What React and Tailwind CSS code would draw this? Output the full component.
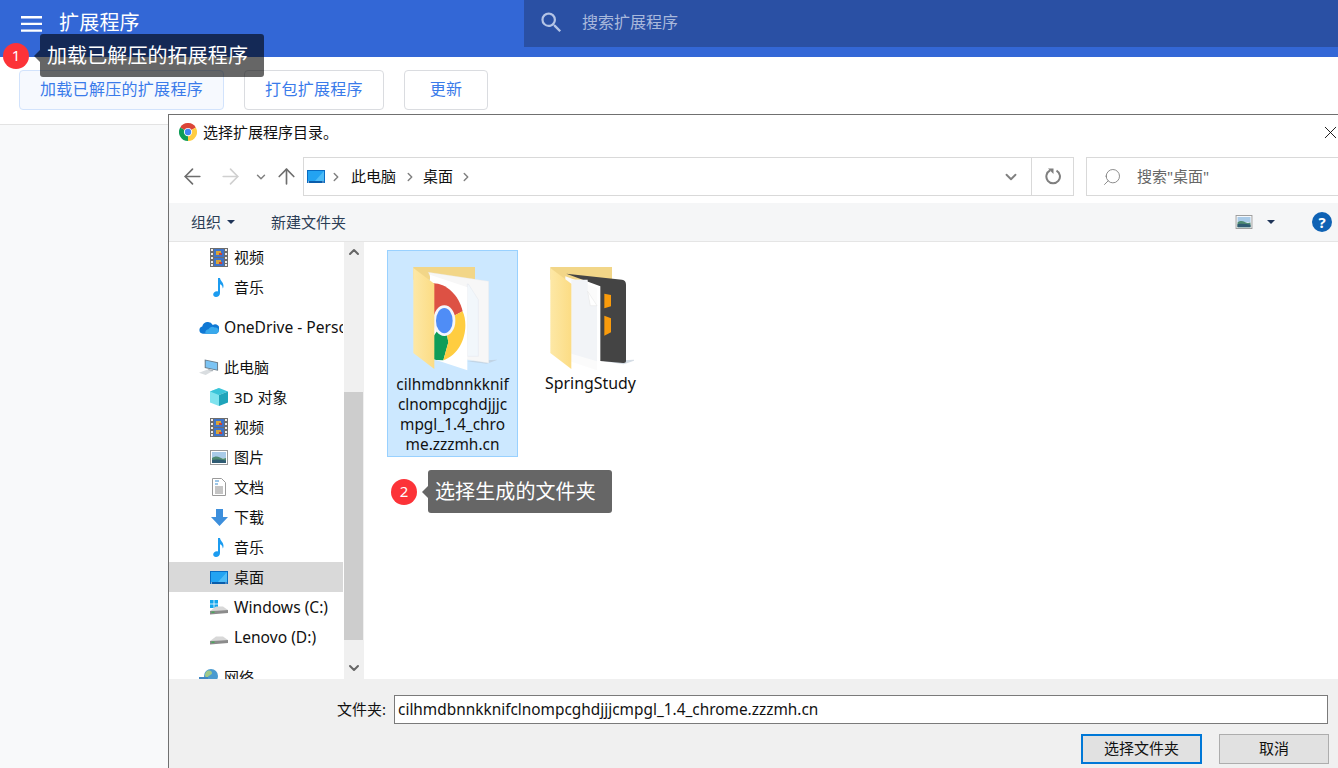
import React from 'react';
import { ArrowLeft, ArrowRight, ArrowUp, ChevronDown, ChevronRight, ChevronUp, Search, X } from 'lucide-react';

function Hamburger() {
  return (
    <svg width="21" height="16" viewBox="0 0 21 16" className="shrink-0">
      <path d="M0 0h21v2.400H0zM0 6.700h21v2.400H0zM0 13.400h21v2.400H0z" fill="#fff" />
    </svg>
  );
}

function MaterialSearch() {
  return (
    <svg width="27" height="27" viewBox="0 0 24 24" className="shrink-0">
      <path d="M15.500 14h-.79l-.28-.27A6.471 6.471 0 0 0 16 9.500 6.500 6.500 0 1 0 9.500 16c1.610 0 3.090-.59 4.230-1.570l.27.28v.79l5 4.990L20.490 19l-4.990-5zm-6 0C7.010 14 5 11.990 5 9.500S7.010 5 9.500 5 14 7.010 14 9.500 11.990 14 9.500 14z" fill="#b4c4e6" />
    </svg>
  );
}

function Refresh() {
  return (
    <svg width="17" height="17" viewBox="0 0 17 17">
      <path d="M11.500 2.600A6.800 6.800 0 1 1 5 2.500" fill="none" stroke="#7f7f7f" strokeWidth="2" />
      <path d="M3 0.500h5.500v5.500z" fill="#7f7f7f" />
    </svg>
  );
}

function Film() {
  return (
    <svg width="18" height="19" viewBox="0 0 18 19">
      <rect x="0" y="0" width="18" height="19" fill="#6d6d6d" />
      <rect x="4" y="1" width="10" height="8" fill="#3f74c9" />
      <rect x="4" y="10" width="10" height="8" fill="#3f74c9" />
      <rect x="6" y="3" width="5" height="4" fill="#d8a53a" />
      <rect x="6" y="12" width="5" height="4" fill="#d8a53a" />
      <rect x="9" y="5" width="3" height="2" fill="#c8413a" />
      <rect x="9" y="14" width="3" height="2" fill="#c8413a" />
      {[1, 5, 9, 13, 16].map((y) => (
        <React.Fragment key={y}>
          <rect x="1" y={y} width="2" height="2" fill="#eeeeee" />
          <rect x="15" y={y} width="2" height="2" fill="#eeeeee" />
        </React.Fragment>
      ))}
    </svg>
  );
}

function Note() {
  return (
    <svg width="18" height="19" viewBox="0 0 18 19">
      <path d="M8 0h2c.3 3 3.500 4 3.500 8 0 1-.3 2-.8 2.600.2-2.400-1.200-3.800-2.700-4.400V15c0 2.400-2 4-4 4-1.700 0-2.800-1-2.800-2.400C3.200 14.700 5 13.300 6.800 13.300c.5 0 .9.100 1.200.2z" fill="#1c9cf0" />
    </svg>
  );
}

function Cloud() {
  return (
    <svg width="21" height="14" viewBox="0 0 21 14">
      <path d="M4 14a3.800 3.800 0 0 1-.6-7.500A6 6 0 0 1 14.500 4.800 4.600 4.600 0 0 1 20.800 11 3.500 3.500 0 0 1 17.500 14z" fill="#0f78d4" />
      <path d="M7 14c-1-2 .5-4.500 3-4.600 1-2.500 4.500-3.500 6.500-1.800 2-.6 4.300.8 4.300 3.400A3.500 3.500 0 0 1 17.500 14z" fill="#38a9ec" />
    </svg>
  );
}

function Computer() {
  return (
    <svg width="21" height="18" viewBox="0 0 21 18">
      <path d="M6 1l14 3v9L6 10z" fill="#6b7a86" />
      <path d="M7 2.300l12 2.500v7L7 9.200z" fill="#7cc4f4" />
      <path d="M0 15l9-3.500 6 1.500-8 4.500z" fill="#d9dde0" />
      <path d="M10 11l5 1.500-.5 1-5-1.400z" fill="#a9b0b6" />
    </svg>
  );
}

function Cube() {
  return (
    <svg width="18" height="18" viewBox="0 0 18 18">
      <path d="M9 0L0 3.500v11L9 18z" fill="#7fe3ee" />
      <path d="M9 0l9 3.500L9 7 0 3.500z" fill="#39c4d8" />
      <path d="M9 7l9-3.500v11L9 18z" fill="#1fa4ba" />
    </svg>
  );
}

function Picture({ w = 18, h = 15 }) {
  return (
    <svg width={w} height={h} viewBox="0 0 18 15">
      <rect x="0.500" y="0.500" width="17" height="14" fill="#fff" stroke="#9a9a9a" />
      <rect x="2" y="2" width="14" height="6" fill="#a9cbe8" />
      <path d="M2 8c3-2 5-2 8-.5s4 1 6 .5v5H2z" fill="#4e8a72" />
      <path d="M2 10c4-1 9-.5 14 .5V13H2z" fill="#2f5b73" />
    </svg>
  );
}

function Doc() {
  return (
    <svg width="14" height="18" viewBox="0 0 14 18">
      <path d="M.5.500h9l4 4v13H.5z" fill="#fff" stroke="#9a9a9a" />
      <path d="M3 3h4M3 6h3" stroke="#3b8ed0" strokeWidth="1" />
      <path d="M3 9h8M3 11h8M3 13h8M3 15h8" stroke="#8a8a8a" strokeWidth="1" />
    </svg>
  );
}

function Download() {
  return (
    <svg width="17" height="17" viewBox="0 0 17 17">
      <path d="M5 0h7v8h5l-8.500 9L0 8h5z" fill="#3d8fdc" />
    </svg>
  );
}

function Desktop({ w = 18, h = 13 }) {
  return (
    <svg width={w} height={h} viewBox="0 0 18 13">
      <rect x="0" y="0" width="18" height="13" fill="#0a6cc2" />
      <rect x="1" y="1" width="16" height="10" fill="#23a3f2" />
      <path d="M8 11L17 1v10z" fill="#4dbcf7" />
      <rect x="1" y="11.500" width="16" height="1" fill="#0a4f94" />
      <rect x="1" y="11.500" width="1" height="1" fill="#fff" />
      <rect x="15.500" y="11.500" width="1" height="1" fill="#fff" />
    </svg>
  );
}

function Drive({ windows }) {
  return (
    <svg width="18" height="15" viewBox="0 0 18 15">
      {windows && (
        <g fill="#12a5ec">
          <rect x="0" y="0" width="3.600" height="3.600" />
          <rect x="4.400" y="0" width="3.600" height="3.600" />
          <rect x="0" y="4.400" width="3.600" height="3.600" />
          <rect x="4.400" y="4.400" width="3.600" height="3.600" />
        </g>
      )}
      <path d="M0 11L6 6.500h7L18 10z" fill="#d8d8d8" />
      <path d="M0 11L18 10V13L0 14.500z" fill="#8b8b8b" />
      <rect x="1.500" y="11.500" width="3" height="1.500" fill="#49a85a" />
    </svg>
  );
}

function Globe() {
  return (
    <svg width="20" height="18" viewBox="0 0 20 18">
      <circle cx="12" cy="8" r="7" fill="#4a9bd0" />
      <path d="M8 3c3-1 5 0 5 2s-3 2-4 4-3 0-3-2 1-3 2-4z" fill="#9fc98a" />
      <path d="M0 9h9v9H0z" fill="#3f86c4" />
    </svg>
  );
}

function ChromeLogo({ size = 18 }) {
  return (
    <svg width={size} height={size} viewBox="0 0 48 48">
      <path d="M24 24L44.800 12A24 24 0 0 0 3.200 12z" fill="#db4437" />
      <path d="M24 24L3.200 12A24 24 0 0 0 24 48z" fill="#0f9d58" />
      <path d="M24 24V48A24 24 0 0 0 44.800 12z" fill="#ffcd40" />
      <circle cx="24" cy="24" r="11" fill="#fff" />
      <circle cx="24" cy="24" r="8.500" fill="#4285f4" />
    </svg>
  );
}

function FolderChrome() {
  return (
    <svg width="87" height="110" viewBox="90 50 261 330" className="ml-px mt-3">
      <defs>
        <linearGradient id="flapA" x1="0" y1="0" x2="1" y2="0">
          <stop offset="0" stopColor="#fde8a6" />
          <stop offset="1" stopColor="#fcdc84" />
        </linearGradient>
        <clipPath id="pageA">
          <path d="M150 85L262 123V372L150 335z" />
        </clipPath>
      </defs>
      <path d="M100 62H285V100H100z" fill="#f2d688" />
      <path d="M260 345L355 340 320 352z" fill="#b9c6d4" opacity="0.6" />
      <path d="M145 78L326 105V350L262 340z" fill="#f7f7f7" stroke="#e6e6e6" />
      <path d="M265 113L295 160V330H262V113z" fill="#f2f7fb" stroke="#d9dfe6" />
      <path d="M150 85L262 123V372L150 335z" fill="#ffffff" />
      <g clipPath="url(#pageA)">
        <path d="M150 112C190 105 235 140 248 195L193 223 150 200z" fill="#dd5144" />
        <path d="M193 223L150 285V340L190 342 205 288z" fill="#0f9d58" />
        <path d="M193 223L248 195C268 240 252 320 190 342L205 288z" fill="#ffcd40" />
        <ellipse cx="193" cy="223" rx="33" ry="46" fill="#f4f6fb" />
        <ellipse cx="193" cy="223" rx="25" ry="38" fill="#4f8df6" />
      </g>
      <path d="M100 65L163 112V368L100 320z" fill="url(#flapA)" />
    </svg>
  );
}

function FolderBook() {
  return (
    <svg width="87" height="110" viewBox="500 50 261 330" className="mt-3">
      <defs>
        <linearGradient id="flapB" x1="0" y1="0" x2="1" y2="0">
          <stop offset="0" stopColor="#fde8a6" />
          <stop offset="1" stopColor="#fcdc84" />
        </linearGradient>
      </defs>
      <path d="M510 62H695V100H510z" fill="#f2d688" />
      <path d="M670 345L770 340 730 354z" fill="#b9c6d4" opacity="0.6" />
      <path d="M558 82L725 100Q737 102 737 115V345Q737 351 728 350L660 344V120z" fill="#444444" />
      <path d="M672 142L692 146V180L672 186z" fill="#f99b0c" />
      <path d="M672 208L692 216V258L672 268z" fill="#f99b0c" />
      <path d="M555 90L650 125V372L555 340z" fill="#fbfbfb" />
      <path d="M573 100H622V140L650 178V345L573 322z" fill="#f2f4f7" />
      <path d="M622 135L650 178H630z" fill="#ffffff" stroke="#d8d8d8" />
      <path d="M510 65L573 112V368L510 320z" fill="url(#flapB)" />
    </svg>
  );
}

const sideRows = [
  { label: '视频', icon: <Film />, child: true },
  { label: '音乐', icon: <Note />, child: true },
  { label: 'OneDrive - Personal', icon: <Cloud />, gap: true, latin: true },
  { label: '此电脑', icon: <Computer />, gap: true },
  { label: '3D 对象', icon: <Cube />, child: true },
  { label: '视频', icon: <Film />, child: true },
  { label: '图片', icon: <Picture />, child: true },
  { label: '文档', icon: <Doc />, child: true },
  { label: '下载', icon: <Download />, child: true },
  { label: '音乐', icon: <Note />, child: true },
  { label: '桌面', icon: <Desktop />, child: true, active: true },
  { label: 'Windows (C:)', icon: <Drive windows />, child: true, latin: true },
  { label: 'Lenovo (D:)', icon: <Drive />, child: true, latin: true },
  { label: '网络', icon: <Globe />, gap: true },
];

function SideRow({ row }) {
  return (
    <div
      className={`flex h-[30px] shrink-0 items-center overflow-hidden whitespace-nowrap text-[#111] ${row.latin ? 'text-[15.6px]' : 'text-[15px]'} ${row.gap ? 'mt-[10px]' : ''} ${row.active ? 'bg-[#d9d9d9]' : ''} ${row.child ? 'pl-[41px]' : 'pl-[30px]'}`}
    >
      <span className={`flex items-center justify-center ${row.child ? 'mr-[6px] w-[18px]' : 'mr-[5px] w-[20px]'}`}>
        {row.icon}
      </span>
      <span className={row.latin ? 'pt-[2px]' : ''}>{row.label}</span>
    </div>
  );
}

function FileItem({ lines, selected, textSize, children }) {
  return (
    <div
      className={`flex h-[207px] w-[131px] flex-col items-center border leading-[20px] text-[#111] ${textSize} ${selected ? 'border-[#99d1ff] bg-[#cce8ff]' : 'border-transparent'}`}
    >
      {children}
      <div className={`flex flex-col items-center ${selected ? 'pt-[2px]' : ''}`}>
        {lines.map((line) => (
          <div key={line} className="whitespace-nowrap">{line}</div>
        ))}
      </div>
    </div>
  );
}

function Tip({ num, text, width, className }) {
  return (
    <div className={`absolute flex items-center ${className}`}>
      <div className="flex h-[26px] w-[26px] items-center justify-center rounded-full bg-[#fc3338] text-[15px] text-white">{num}</div>
      <div className="ml-[5px] h-0 w-0 border-y-[6px] border-r-[6px] border-y-transparent border-r-black/60" />
      <div className={`flex h-[43px] items-center rounded-[3px] bg-black/60 pl-[7px] text-[20px] tracking-[0.1px] text-white ${width}`}>{text}</div>
    </div>
  );
}

export default function App() {
  return (
    <div className="relative h-[768px] w-[1338px] overflow-hidden bg-[#f8f9fa] font-['Noto_Sans','Noto_Sans_CJK_SC',sans-serif]">
      {/* chrome extensions page */}
      <header className="flex h-[57px] bg-[#3367d6] text-white">
        <div className="flex h-[47px] w-[524px] items-center pl-[21px]">
          <Hamburger />
          <span className="ml-[17px] pb-[2px] text-[20px] tracking-[0.2px]">扩展程序</span>
        </div>
        <div className="flex h-[47px] flex-1 items-center bg-[#2a50a4] pb-[3px] pl-[14px]">
          <MaterialSearch />
          <span className="ml-[17px] text-[16px] text-[#a9b9dc]">搜索扩展程序</span>
        </div>
      </header>
      <div className="flex h-[68px] items-start gap-5 border-b border-[#e3e3e3] bg-white pl-[19px] pt-[13px] text-[16px] tracking-[0.3px] text-[#3a7bea]">
        <button className="flex h-[40px] w-[205px] items-center justify-center rounded border border-[#d2e3fc] bg-[#f6f9fe] pb-[2px]">加载已解压的扩展程序</button>
        <button className="flex h-[40px] w-[140px] items-center justify-center rounded border border-[#dadce0] pb-[2px]">打包扩展程序</button>
        <button className="flex h-[40px] w-[84px] items-center justify-center rounded border border-[#dadce0] pb-[2px]">更新</button>
      </div>

      <Tip num="1" text="加载已解压的拓展程序" width="w-[224px]" className="left-[3px] top-[34px]" />

      {/* file picker window */}
      <div className="absolute left-[168px] top-[114px] flex h-[654px] w-[1190px] flex-col border-l border-t border-[#707070] bg-white">
        <div className="flex h-[42px] shrink-0 items-center pb-[8px] pl-[10px] text-[15px] text-[#111]">
          <ChromeLogo />
          <span className="ml-[6px] w-[135px]">选择扩展程序目录。</span>
          <X size={21} strokeWidth={1} className="ml-[982px] text-black" />
        </div>

        <div className="flex h-[39px] shrink-0 items-center">
          <div className="flex w-[134px] items-center pl-[11px]">
            <ArrowLeft size={25} strokeWidth={1.600} className="shrink-0 text-[#6e6e6e]" />
            <ArrowRight size={25} strokeWidth={1.600} className="ml-[13px] shrink-0 text-[#d0d0d0]" />
            <ChevronDown size={14} strokeWidth={2.500} className="ml-[11px] shrink-0 text-[#808080]" />
            <ArrowUp size={25} strokeWidth={1.600} className="ml-[6px] shrink-0 text-[#6e6e6e]" />
          </div>
          <div className="flex h-[39px] w-[771px] items-center border border-[#d9d9d9] text-[15px] text-[#111]">
            <span className="ml-[3px]"><Desktop /></span>
            <ChevronRight size={14} strokeWidth={2.500} className="ml-[4px] text-[#808080]" />
            <span className="ml-[8px]">此电脑</span>
            <ChevronRight size={14} strokeWidth={2.500} className="ml-[7px] text-[#808080]" />
            <span className="ml-[6px]">桌面</span>
            <ChevronRight size={14} strokeWidth={2.500} className="ml-[6px] text-[#808080]" />
            <ChevronDown size={18} strokeWidth={2.500} className="ml-[529px] text-[#808080]" />
            <div className="ml-[11px] flex h-full flex-1 items-center justify-center border-l border-[#d9d9d9] pl-[2px]">
              <Refresh />
            </div>
          </div>
          <div className="ml-[12px] flex h-[39px] flex-1 items-center border border-[#d9d9d9] pl-[15px] text-[15px] text-[#666]">
            <Search size={20} strokeWidth={1} className="-scale-x-100 text-[#777]" />
            <span className="ml-[15px]">搜索"桌面"</span>
          </div>
        </div>

        <div className="mt-[7px] flex h-[39px] shrink-0 items-center border-b border-[#e5e5e5] bg-[#f5f6f7] text-[15px] text-[#2b3d55]">
          <span className="ml-[22px]">组织</span>
          <span className="ml-[6px] h-0 w-0 border-x-[4px] border-t-[4px] border-x-transparent border-t-[#1f3558]" />
          <span className="ml-[36px]">新建文件夹</span>
          <span className="ml-[889px]"><Picture w={18} h={14} /></span>
          <span className="ml-[14px] h-0 w-0 border-x-[4px] border-t-[4px] border-x-transparent border-t-[#1f3558]" />
          <span className="ml-[37px] flex h-[20px] w-[20px] items-center justify-center rounded-full bg-[#0f62b4] text-[15px] font-bold text-white">?</span>
        </div>

        <div className="flex min-h-0 flex-1">
          <div className="flex w-[175px] shrink-0 flex-col overflow-hidden pr-px">
            {sideRows.map((row, i) => (
              <SideRow key={i} row={row} />
            ))}
          </div>
          <div className="flex w-[20px] shrink-0 flex-col bg-[#f0f0f0] text-[#666]">
            <div className="flex h-[20px] items-center justify-center"><ChevronUp size={16} strokeWidth={3} /></div>
            <div className="h-[130px]" />
            <div className="h-[248px] w-[19px] bg-[#cdcdcd]" />
            <div className="flex flex-1 items-end justify-center pb-[3px]"><ChevronDown size={16} strokeWidth={3} /></div>
          </div>
          <div className="flex flex-1 gap-[7px] pl-[23px] pt-2">
            <FileItem selected textSize="text-[15.4px]" lines={['cilhmdbnnkknif', 'clnompcghdjjjc', 'mpgl_1.4_chro', 'me.zzzmh.cn']}>
              <FolderChrome />
            </FileItem>
            <FileItem textSize="text-[15.9px]" lines={['SpringStudy']}>
              <FolderBook />
            </FileItem>
          </div>
        </div>

        <div className="flex h-[89px] shrink-0 flex-col bg-[#f0f0f0] text-[15px] text-[#111]">
          <div className="mt-[16px] flex items-center pl-[168px]">
            <span>文件夹:</span>
            <div className="ml-[8px] flex h-[29px] w-[934px] items-center border border-[#7a7a7a] bg-white pl-[3px] text-[15.4px]">
              cilhmdbnnkknifclnompcghdjjjcmpgl_1.4_chrome.zzzmh.cn
            </div>
          </div>
          <div className="mt-[10px] flex pl-[912px]">
            <button className="flex h-[30px] w-[121px] items-center justify-center border-2 border-[#0078d7] bg-[#e1e1e1] pb-px">选择文件夹</button>
            <button className="ml-[17px] flex h-[30px] w-[110px] items-center justify-center border border-[#adadad] bg-[#e1e1e1] pb-px">取消</button>
          </div>
        </div>
      </div>

      <Tip num="2" text="选择生成的文件夹" width="w-[184px]" className="left-[391px] top-[470px]" />
    </div>
  );
}
